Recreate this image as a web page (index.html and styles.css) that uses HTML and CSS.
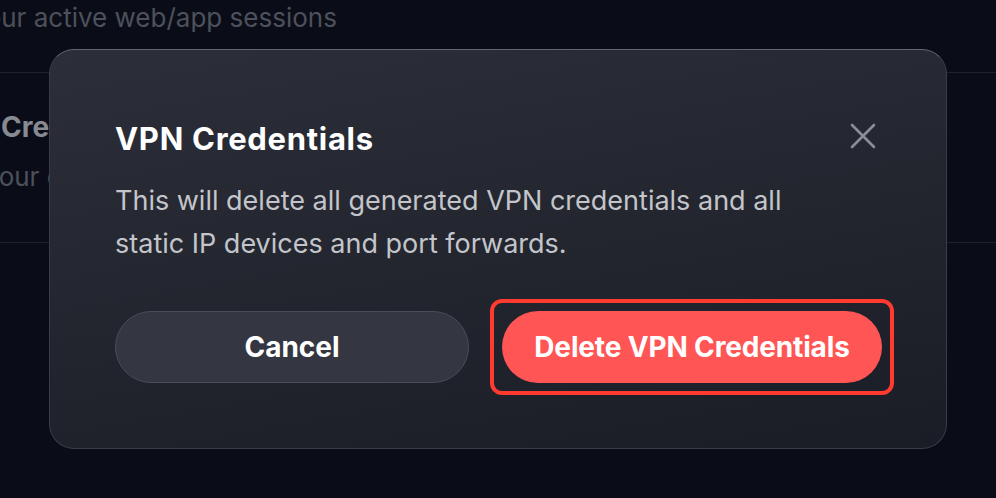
FILE: index.html
```html
<!DOCTYPE html>
<html lang="en">
<head>
    <meta charset="UTF-8">
    <meta name="viewport" content="width=device-width, initial-scale=1.0">
    <title>VPN Credentials</title>
    <link rel="stylesheet" href="styles.css">
</head>
<body>
    <div class="settings-list">
        <div class="settings-row first">
            <p class="row-desc sessions">Your active web/app sessions</p>
        </div>
        <div class="settings-row">
            <h3 class="row-title">VPN Credentials</h3>
            <p class="row-desc creds">Your credentials and devices</p>
        </div>
    </div>

    <div class="modal">
        <div class="modal-header">
            <h2>VPN Credentials</h2>
            <button class="close-btn" aria-label="Close">
                <svg width="26" height="26" viewBox="0 0 26 26" fill="none">
                    <path d="M2 2L24 24M24 2L2 24" stroke="#8b8e96" stroke-width="2.6" stroke-linecap="round"/>
                </svg>
            </button>
        </div>
        <p class="modal-text">This will delete all generated VPN credentials and all static IP devices and port forwards.</p>
        <div class="modal-actions">
            <button class="btn btn-cancel">Cancel</button>
            <div class="focus-ring">
                <button class="btn btn-danger">Delete VPN Credentials</button>
            </div>
        </div>
    </div>
</body>
</html>
```

FILE: styles.css
```css
body {
    font-family: Inter, "Noto Sans", sans-serif;
    background-color: #0a0d17;
    margin: 0;
    height: 100vh;
    overflow: hidden;
}

.settings-row {
    border-bottom: 1px solid #1e222c;
    padding: 36px 0 47px;
}

.settings-row.first {
    padding: 0 0 36px;
}

.row-title {
    margin: 0 0 14px -66px;
    font-size: 28px;
    line-height: 36px;
    font-weight: 700;
    color: #878a92;
}

.row-desc {
    margin: 0;
    font-size: 26px;
    color: #4d515b;
    line-height: 36px;
}

.row-desc.sessions {
    margin-left: -30px;
}

.row-desc.creds {
    margin-left: -17px;
}

.modal {
    position: absolute;
    left: 49px;
    top: 49px;
    width: 898px;
    height: 400px;
    box-sizing: border-box;
    padding: 69px 52px 0 65px;
    border-radius: 25px;
    border: 1px solid #3a3d47;
    border-top-color: #62656e;
    background: linear-gradient(170deg, #2c2f39 0%, #23262f 50%, #1a1d26 100%);
}

.modal-header {
    display: flex;
    justify-content: space-between;
    align-items: center;
    padding-right: 18px;
}

.modal-header h2 {
    margin: 0;
    font-size: 31px;
    line-height: 40px;
    font-weight: 700;
    color: #ffffff;
    letter-spacing: 0.7px;
}

.close-btn {
    background: none;
    border: none;
    padding: 0;
    width: 26px;
    height: 26px;
    margin-bottom: 7px;
    cursor: pointer;
}

.modal-text {
    margin: 20px 0 0;
    max-width: 700px;
    font-size: 27px;
    line-height: 43px;
    color: #c3c5ca;
}

.modal-actions {
    display: flex;
    align-items: center;
    gap: 21px;
    margin-top: 34px;
}

.btn {
    flex-shrink: 0;
    height: 72px;
    border-radius: 36px;
    font-family: inherit;
    font-size: 28px;
    font-weight: 700;
    color: #ffffff;
    cursor: pointer;
}

.btn-cancel {
    width: 354px;
    background-color: #343741;
    border: 1px solid #4a4d57;
}

.focus-ring {
    flex-shrink: 0;
    padding: 8px;
    border: 4px solid #ff3b30;
    border-radius: 12px;
}

.btn-danger {
    display: block;
    width: 380px;
    background-color: #ff5555;
    border: none;
    letter-spacing: -0.15px;
}
```
